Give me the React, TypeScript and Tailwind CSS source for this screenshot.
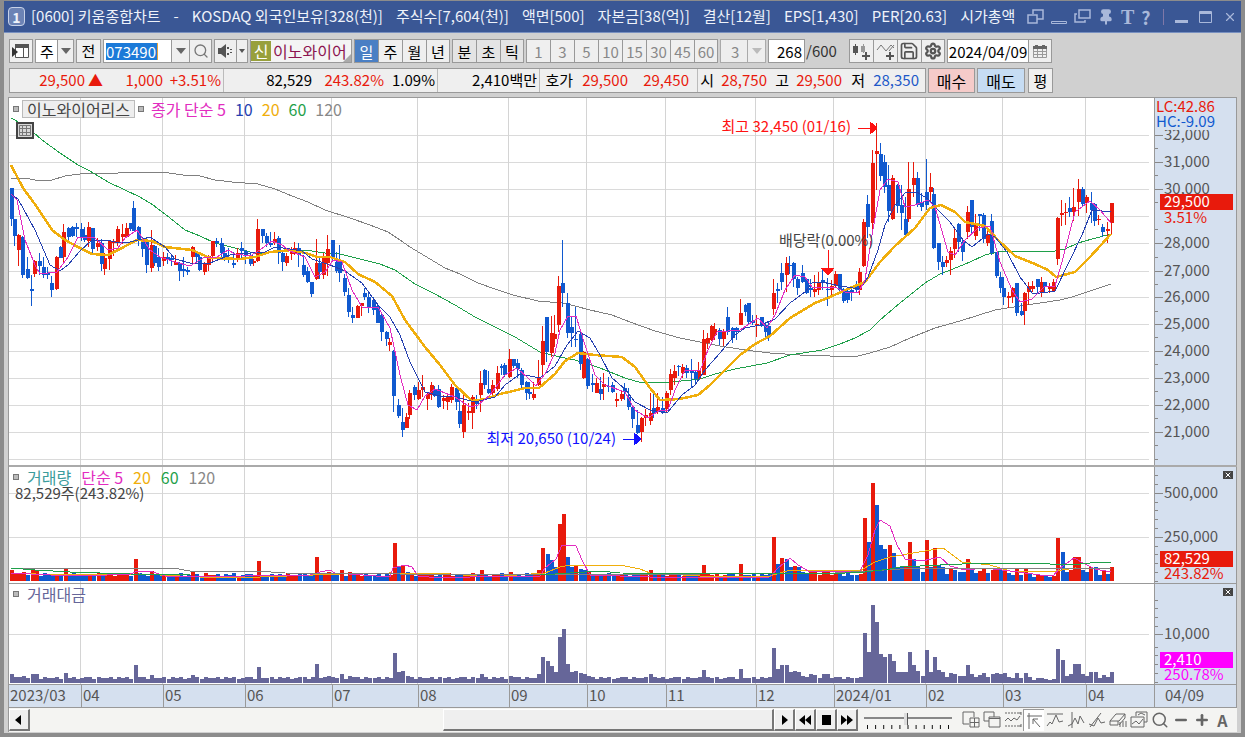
import React from "react";
import {
  Search,
  Save,
  Settings,
  Calendar,
  Pin,
  Volume1,
  Minus,
  Plus,
  X,
} from "lucide-react";

type Candle = [x: number, high: number, top: number, bottom: number, low: number];
type VolumeBar = [x: number, height: number, up: 0 | 1];

const RED = "#e81a0c";
const BLUE = "#1059cf";
const PURPLE = "#666699";
const FIRST_X = 12;
const STEP = 4.12;
const BAR_COUNT = 268;

const upCandles: Candle[] = [
  [19, 234, 235, 250, 266], [35, 260, 261, 274, 277], [57, 256, 257, 289, 290], [64, 224, 232, 257, 263],
  [89, 222, 227, 241, 247], [98, 238, 243, 247, 251], [105, 253, 258, 269, 275], [110, 240, 241, 259, 270],
  [114, 239, 241, 243, 256], [118, 226, 229, 242, 246], [123, 224, 234, 237, 244], [127, 223, 228, 237, 238],
  [152, 230, 245, 268, 272], [164, 252, 257, 261, 266], [176, 255, 262, 265, 265], [193, 246, 247, 257, 264],
  [205, 262, 263, 272, 275], [209, 255, 256, 265, 271], [213, 241, 241, 256, 263], [238, 248, 253, 260, 262],
  [254, 259, 261, 263, 266], [258, 219, 229, 261, 262], [275, 232, 239, 243, 245], [287, 253, 256, 263, 266],
  [292, 247, 251, 254, 260], [295, 242, 248, 253, 255], [317, 239, 263, 279, 280], [324, 253, 257, 275, 279],
  [328, 235, 249, 263, 276], [358, 305, 306, 318, 318], [362, 303, 303, 306, 316], [390, 338, 342, 345, 351],
  [407, 413, 417, 428, 428], [410, 390, 393, 415, 419], [419, 382, 390, 399, 400], [423, 375, 387, 390, 397],
  [428, 392, 394, 399, 410], [432, 382, 385, 395, 400], [444, 395, 398, 401, 409], [448, 395, 397, 402, 410],
  [452, 384, 387, 400, 403], [464, 392, 405, 432, 438], [469, 403, 411, 413, 420], [473, 395, 397, 413, 429],
  [481, 371, 383, 395, 412], [493, 380, 385, 393, 395], [498, 366, 373, 389, 391], [510, 349, 359, 377, 378],
  [534, 382, 394, 398, 400], [539, 360, 377, 385, 386], [543, 326, 341, 365, 375], [552, 316, 333, 353, 357],
  [555, 315, 334, 339, 347], [559, 276, 286, 325, 332], [584, 351, 352, 378, 379], [597, 378, 383, 393, 393],
  [604, 373, 384, 387, 400], [617, 393, 399, 401, 407], [622, 390, 394, 399, 401], [642, 417, 418, 432, 442],
  [646, 409, 415, 418, 426], [651, 393, 413, 421, 425], [658, 393, 407, 412, 414], [667, 391, 393, 409, 412],
  [671, 369, 374, 390, 395], [675, 365, 371, 378, 385], [683, 364, 367, 373, 378], [699, 362, 371, 379, 380],
  [704, 330, 339, 375, 375], [708, 333, 338, 343, 349], [712, 325, 326, 340, 341], [715, 323, 329, 335, 340],
  [724, 329, 331, 339, 346], [741, 299, 313, 325, 325], [757, 315, 324, 326, 337], [774, 279, 293, 309, 315],
  [787, 257, 263, 275, 292], [815, 275, 289, 292, 297], [819, 272, 283, 290, 295], [832, 280, 286, 290, 297],
  [836, 271, 274, 286, 287], [860, 268, 272, 290, 295], [864, 219, 222, 266, 267], [873, 150, 163, 223, 230],
  [877, 123, 151, 154, 190], [893, 175, 178, 219, 220], [909, 162, 189, 219, 222], [914, 162, 178, 185, 197],
  [931, 173, 187, 192, 202], [947, 256, 260, 263, 267], [951, 247, 251, 260, 275], [955, 229, 238, 249, 258],
  [968, 206, 212, 232, 239], [976, 214, 223, 236, 240], [988, 228, 234, 243, 246], [1009, 292, 296, 298, 308],
  [1013, 287, 288, 297, 303], [1025, 292, 293, 311, 325], [1029, 282, 286, 292, 305], [1033, 281, 286, 289, 292],
  [1042, 277, 282, 292, 297], [1050, 283, 287, 289, 293], [1054, 279, 282, 291, 292], [1058, 217, 218, 259, 265],
  [1062, 200, 213, 215, 226], [1066, 203, 212, 213, 225], [1074, 188, 207, 212, 221], [1079, 179, 189, 202, 216],
  [1087, 195, 197, 203, 213], [1099, 215, 219, 220, 225], [1108, 222, 229, 231, 243], [1112, 203, 203, 223, 235],
];

const downCandles: Candle[] = [
  [12, 188, 188, 219, 226], [15, 219, 219, 236, 246], [23, 236, 237, 275, 278], [28, 257, 269, 278, 279],
  [32, 275, 289, 291, 306], [40, 253, 261, 266, 275], [44, 257, 267, 275, 278], [48, 267, 273, 275, 279],
  [52, 276, 283, 290, 297], [61, 246, 247, 258, 258], [69, 227, 228, 237, 243], [73, 226, 227, 236, 237],
  [77, 223, 227, 229, 237], [82, 223, 229, 237, 241], [85, 227, 235, 240, 242], [93, 228, 228, 249, 253],
  [102, 239, 243, 264, 271], [131, 223, 223, 229, 231], [134, 201, 208, 231, 231], [139, 226, 227, 241, 246],
  [143, 237, 239, 249, 257], [147, 237, 240, 265, 273], [155, 245, 246, 263, 266], [159, 248, 257, 267, 271],
  [168, 253, 257, 260, 264], [172, 256, 258, 260, 266], [180, 262, 263, 271, 281], [184, 257, 269, 271, 277],
  [188, 267, 270, 272, 275], [197, 252, 253, 257, 264], [200, 255, 257, 270, 271], [217, 238, 241, 243, 247],
  [222, 238, 243, 253, 257], [225, 247, 253, 257, 261], [229, 248, 257, 258, 263], [234, 252, 263, 265, 268],
  [242, 242, 248, 251, 260], [246, 250, 251, 256, 264], [251, 252, 255, 264, 266], [263, 229, 229, 236, 243],
  [267, 233, 236, 243, 247], [271, 232, 243, 245, 247], [279, 236, 238, 253, 264], [283, 250, 253, 262, 271],
  [299, 243, 248, 255, 267], [304, 255, 265, 275, 277], [308, 267, 271, 282, 283], [312, 282, 282, 294, 297],
  [320, 257, 263, 272, 279], [333, 240, 240, 257, 260], [337, 252, 262, 271, 273], [340, 245, 262, 273, 282],
  [345, 274, 278, 292, 296], [349, 288, 295, 312, 317], [353, 307, 315, 318, 323], [365, 288, 293, 297, 300],
  [369, 293, 297, 308, 313], [374, 297, 300, 310, 315], [378, 303, 306, 323, 323], [382, 313, 315, 332, 341],
  [387, 331, 332, 339, 346], [394, 350, 351, 396, 412], [399, 399, 405, 416, 418], [403, 408, 422, 430, 437],
  [415, 385, 387, 395, 400], [435, 386, 390, 396, 397], [439, 385, 389, 407, 408], [457, 385, 388, 402, 410],
  [460, 393, 411, 424, 428], [477, 395, 401, 404, 409], [485, 369, 370, 385, 389], [489, 371, 389, 393, 394],
  [502, 364, 366, 368, 375], [505, 363, 365, 375, 377], [514, 359, 359, 366, 368], [518, 359, 363, 369, 378],
  [522, 368, 370, 385, 390], [527, 381, 382, 393, 400], [530, 382, 392, 394, 399], [547, 317, 317, 352, 362],
  [563, 240, 283, 293, 307], [568, 293, 303, 333, 338], [572, 317, 327, 333, 347], [576, 307, 339, 340, 347],
  [581, 330, 334, 364, 370], [588, 358, 359, 386, 389], [593, 374, 383, 385, 392], [601, 377, 389, 394, 400],
  [609, 377, 386, 387, 392], [613, 382, 385, 392, 393], [625, 383, 388, 392, 400], [629, 388, 397, 407, 410],
  [633, 405, 407, 419, 428], [638, 410, 425, 433, 434], [654, 393, 408, 413, 418], [663, 397, 408, 413, 414],
  [679, 365, 366, 367, 376], [687, 365, 368, 373, 378], [692, 359, 371, 373, 387], [696, 370, 372, 379, 383],
  [720, 328, 330, 339, 345], [728, 307, 317, 332, 335], [733, 327, 328, 338, 343], [737, 327, 328, 332, 340],
  [746, 304, 305, 312, 316], [749, 303, 303, 322, 325], [753, 315, 321, 323, 325], [762, 317, 317, 326, 327],
  [766, 322, 325, 332, 338], [769, 322, 326, 337, 341], [778, 283, 289, 291, 303], [782, 263, 273, 282, 290],
  [790, 256, 265, 266, 274], [794, 262, 263, 279, 287], [798, 277, 279, 288, 295], [803, 265, 273, 282, 283],
  [807, 278, 279, 293, 294], [811, 279, 288, 290, 297], [823, 268, 280, 283, 290], [828, 278, 289, 290, 306],
  [840, 274, 274, 290, 292], [844, 288, 289, 301, 303], [848, 290, 291, 300, 303], [852, 289, 290, 292, 301],
  [857, 281, 285, 290, 292], [868, 195, 204, 227, 238], [881, 143, 154, 176, 181], [885, 155, 162, 187, 193],
  [889, 165, 185, 211, 222], [898, 184, 185, 206, 213], [902, 185, 205, 213, 230], [906, 197, 219, 235, 236],
  [918, 172, 178, 205, 207], [922, 193, 202, 207, 211], [927, 159, 192, 205, 210], [934, 188, 194, 248, 249],
  [939, 243, 243, 262, 270], [943, 256, 262, 267, 275], [959, 223, 224, 242, 252], [963, 238, 242, 252, 261],
  [972, 200, 200, 227, 233], [980, 214, 214, 216, 231], [984, 213, 215, 239, 243], [992, 214, 221, 253, 255],
  [997, 252, 252, 276, 278], [1001, 272, 277, 288, 293], [1004, 277, 288, 297, 305], [1017, 283, 283, 313, 316],
  [1022, 303, 311, 315, 316], [1038, 279, 279, 287, 293], [1045, 282, 282, 287, 293], [1070, 197, 208, 212, 217],
  [1083, 187, 189, 204, 206], [1092, 192, 203, 210, 223], [1095, 203, 204, 221, 226], [1103, 224, 227, 232, 237],
];

const priceAverages = [
  { color: "#808080", width: 1, points: "11,178 25,178 35,180 52,180 65,176 80,174 90,173 118,173 130,172 162,172 183,175 200,176 215,180 232,182 258,184 275,189 292,196 308,202 325,210 350,218 370,225 388,232 400,240 410,247 430,259 445,268 460,274 478,283 495,289 513,295 538,301 562,303 575,306 590,310 612,315 630,322 655,331 680,338 705,343 720,346 745,350 770,353 800,355 830,356 858,356 870,353 890,347 910,338 935,328 960,321 995,310 1020,306 1060,300 1072,297 1090,291 1111,284" },
  { color: "#1fa04a", width: 1, points: "11,118 22,124 33,132 42,140 60,153 78,165 90,171 108,182 125,190 140,197 153,205 165,214 175,222 185,230 200,236 215,243 235,248 258,254 280,251 305,250 325,253 340,254 360,259 380,264 395,270 415,284 435,294 455,305 475,317 495,327 515,337 540,352 560,357 575,360 600,368 625,378 642,383 672,382 700,379 715,374 735,369 767,363 790,355 822,350 840,344 855,338 870,330 880,320 900,303 925,283 940,274 958,267 970,262 985,255 998,252 1015,251 1050,252 1065,249 1078,243 1092,239 1111,234" },
  { color: "#f0ae0c", width: 2.5, points: "11,165 23,188 37,207 52,230 65,240 78,247 92,254 108,255 120,249 137,240 152,241 165,247 192,250 210,258 240,259 255,257 270,252 292,250 305,253 318,257 330,257 345,262 358,274 375,282 392,296 405,320 425,347 440,365 455,385 472,401 485,399 500,394 513,391 525,388 539,388 555,374 565,361 578,353 595,355 622,357 635,367 650,388 660,400 680,399 698,395 710,385 725,370 740,355 755,344 770,336 790,318 815,303 830,297 850,288 865,282 880,262 895,246 915,228 930,208 941,205 955,212 965,222 985,226 998,240 1015,256 1035,264 1048,270 1056,277 1075,272 1090,257 1111,234" },
  { color: "#2540b0", width: 1, points: "11,194 18,199 35,230 50,265 60,271 68,265 80,251 92,240 108,240 118,243 130,242 150,237 165,247 175,259 190,263 210,263 230,255 250,253 265,252 275,247 290,249 302,251 312,259 330,265 345,271 362,283 378,305 390,317 400,335 410,362 425,392 440,396 455,397 475,402 495,397 505,385 520,374 540,378 555,366 567,345 578,331 590,338 600,355 612,378 625,389 635,402 650,410 667,413 682,395 695,385 705,370 720,353 735,335 745,328 760,325 775,319 790,303 805,292 812,283 822,282 840,286 860,289 868,277 878,250 885,225 895,205 905,193 917,192 928,199 935,207 950,222 963,240 972,247 988,234 995,237 1007,252 1020,277 1033,294 1055,291 1070,260 1082,235 1092,210 1111,212" },
  { color: "#e22cc0", width: 1, points: "11,194 17,200 25,240 35,265 40,274 57,272 68,257 78,237 95,238 108,250 118,248 125,238 137,230 150,250 160,257 175,262 190,266 205,257 217,257 228,250 235,254 250,256 260,250 272,241 282,245 290,251 305,257 315,277 325,272 333,260 342,262 352,290 362,307 378,307 390,328 400,375 408,405 417,410 425,396 435,389 455,397 470,407 478,405 490,395 505,375 517,368 528,378 536,386 545,374 555,353 560,330 568,316 576,316 585,345 595,375 605,385 625,392 635,410 648,418 660,410 668,410 675,390 685,370 700,371 708,350 717,332 740,330 758,318 767,328 775,315 785,290 795,275 805,277 812,287 825,287 835,287 845,292 858,293 865,280 872,235 880,190 888,179 898,182 905,207 915,205 928,200 935,207 948,252 955,255 965,240 978,228 990,226 1000,262 1012,290 1020,302 1032,299 1045,286 1055,286 1062,262 1075,212 1090,201 1100,210 1111,223" },
];

const volumeAverages = [
  { color: "#f0ae0c", points: "11,573 60,575 140,574 200,577 260,577 340,574 390,573 450,574 490,577 545,573 560,567 570,565 620,565 640,569 650,573 700,576 770,576 790,570 830,570 860,571 875,562 890,557 925,551 943,548 962,562 990,565 1010,571 1050,572 1075,568 1111,569" },
  { color: "#e22cc0", points: "11,573 50,575 85,576 130,574 138,571 150,571 165,576 180,577 310,575 320,572 330,570 335,573 390,577 393,568 405,565 412,567 418,576 440,578 500,576 540,576 545,568 556,559 562,545 576,546 582,560 590,575 680,578 770,577 778,568 790,558 798,565 810,572 860,571 868,555 875,530 880,520 890,526 897,545 905,559 922,561 940,557 950,566 965,570 985,568 1010,571 1040,575 1053,576 1060,568 1074,558 1085,564 1095,569 1111,572" },
  { color: "#808080", points: "11,568 94,568 173,568 190,571 256,571 285,573 400,574 480,575 700,574 835,573 900,569 1111,568" },
  { color: "#1fa04a", points: "11,568 35,570 70,572 130,574 190,575 540,575 600,571 620,573 825,574 865,572 890,569 900,567 940,565 985,563 1030,563 1070,565 1090,563 1111,562" },
];

const heavyVolume: VolumeBar[] = [
  [12, 11, 1], [16, 8, 1], [24, 9, 1], [32, 11, 1], [36, 11, 1], [64, 12, 1], [134, 22, 1], [139, 8, 0], [152, 10, 1],
  [193, 10, 1], [258, 20, 1], [317, 24, 1], [328, 9, 1], [340, 11, 1], [349, 9, 1], [394, 38, 1], [399, 14, 0],
  [403, 15, 1], [407, 9, 0], [481, 11, 1], [511, 9, 1], [539, 11, 1], [543, 33, 1], [547, 27, 0], [552, 21, 0],
  [556, 14, 0], [559, 57, 1], [563, 67, 1], [568, 24, 0], [572, 14, 0], [576, 15, 1], [580, 12, 0], [584, 11, 0],
  [588, 9, 1], [651, 11, 1], [704, 16, 1], [741, 17, 1], [774, 44, 1], [778, 17, 0], [782, 23, 1], [787, 22, 0],
  [791, 14, 0], [794, 15, 1], [798, 14, 0], [803, 9, 0], [811, 11, 1], [815, 10, 1], [823, 11, 1], [828, 11, 1],
  [864, 63, 1], [868, 39, 0], [873, 98, 1], [877, 76, 0], [881, 36, 0], [885, 32, 0], [889, 36, 1], [893, 28, 0],
  [898, 14, 0], [902, 14, 0], [906, 14, 1], [910, 39, 1], [914, 22, 0], [918, 15, 0], [922, 9, 0], [926, 41, 1],
  [930, 14, 0], [934, 33, 1], [939, 16, 0], [943, 14, 0], [947, 7, 0], [951, 12, 1], [955, 11, 0], [959, 9, 0],
  [963, 9, 0], [968, 22, 1], [972, 11, 0], [976, 8, 0], [980, 10, 1], [984, 12, 1], [988, 8, 0], [992, 11, 1],
  [997, 13, 1], [1001, 11, 0], [1005, 13, 1], [1009, 8, 0], [1013, 6, 0], [1017, 13, 1], [1021, 6, 0], [1025, 12, 1],
  [1029, 8, 0], [1033, 4, 0], [1038, 6, 1], [1042, 6, 1], [1046, 5, 0], [1050, 4, 0], [1054, 5, 1], [1058, 43, 1],
  [1062, 29, 0], [1066, 9, 0], [1070, 11, 1], [1075, 24, 1], [1079, 24, 1], [1083, 11, 0], [1087, 9, 0],
  [1091, 14, 1], [1095, 14, 0], [1099, 6, 0], [1103, 10, 1], [1108, 7, 0], [1112, 14, 1],
];

const quietHeights = [7, 6, 8, 5, 6, 7, 7, 5, 8, 6, 6, 7, 5];

const slotOf = (x: number) => Math.round((x - FIRST_X) / STEP);

const volumeBars = Array.from({ length: BAR_COUNT }, (_, i) => {
  const heavy = heavyVolume.find((bar) => slotOf(bar[0]) === i);
  return {
    x: Math.round(FIRST_X + i * STEP) - 2,
    height: heavy ? heavy[1] : quietHeights[i % quietHeights.length],
    up: heavy ? heavy[2] === 1 : upCandles.some((candle) => slotOf(candle[0]) === i),
  };
});

const months = [
  { x: 9, label: "2023/03" },
  { x: 81, label: "04" },
  { x: 163, label: "05" },
  { x: 245, label: "06" },
  { x: 332, label: "07" },
  { x: 418, label: "08" },
  { x: 509, label: "09" },
  { x: 587, label: "10" },
  { x: 666, label: "11" },
  { x: 756, label: "12" },
  { x: 834, label: "2024/01" },
  { x: 926, label: "02" },
  { x: 1003, label: "03" },
  { x: 1086, label: "04" },
];

const priceLines = [135, 162, 189, 216, 243, 271, 297, 324, 351, 378, 405, 432, 459];

const priceLabels = [
  { y: 135, text: "32,000" },
  { y: 162, text: "31,000" },
  { y: 189, text: "30,000" },
  { y: 243, text: "28,000" },
  { y: 271, text: "27,000" },
  { y: 297, text: "26,000" },
  { y: 324, text: "25,000" },
  { y: 351, text: "24,000" },
  { y: 378, text: "23,000" },
  { y: 405, text: "22,000" },
  { y: 432, text: "21,000" },
];

interface PlotProps {
  top: number;
  height: number;
  lines: number[];
  children: React.ReactNode;
}

const Plot = ({ top, height, lines, children }: PlotProps) => (
  <svg
    className="block w-full bg-white"
    height={height}
    viewBox={`9 ${top} 1145 ${height}`}
    preserveAspectRatio="none"
    shapeRendering="crispEdges"
  >
    {lines.map((y) => (
      <rect key={y} x={9} y={y} width={1140} height={1} fill="#dadada" />
    ))}
    {months.slice(1).map((month) => (
      <rect key={month.x} x={month.x - 1} y={top} width={1} height={height} fill="#d4d4d4" />
    ))}
    {children}
  </svg>
);

const Candles = ({ data, color }: { data: Candle[]; color: string }) => (
  <g fill={color}>
    {data.map(([x, high, top, bottom, low]) => (
      <g key={x}>
        <rect x={x - 1} y={high} width={1} height={Math.max(low - high, 1)} />
        <rect x={x - 2} y={top} width={4} height={Math.max(bottom - top, 1)} />
      </g>
    ))}
  </g>
);

interface AxisProps {
  top: number;
  height: number;
  labels: { y: number; text: string }[];
  minor: number[];
  children?: React.ReactNode;
}

const Axis = ({ top, height, labels, minor, children }: AxisProps) => (
  <svg
    className="block w-[83px] shrink-0 border-x border-[#999] bg-[#d5e0ef]"
    height={height}
    viewBox={`1155 ${top} 81 ${height}`}
  >
    {minor.map((y) => (
      <rect key={y} x={1155} y={y} width={3} height={1} fill="#888" />
    ))}
    {labels.map((label) => (
      <g key={label.text}>
        <rect x={1155} y={label.y} width={8} height={1} fill="#888" />
        <text x={1164} y={label.y + 5} fill="#555">
          {label.text}
        </text>
      </g>
    ))}
    {children}
  </svg>
);

const Handle = () => <span className="size-1.5 border border-[#777] bg-[#bbb]" />;

const ClosePane = () => (
  <button
    aria-label="닫기"
    className="absolute top-1 right-1 flex h-2 w-2.5 items-center justify-center bg-[#444] text-white"
  >
    <X className="size-2" strokeWidth={3} />
  </button>
);

const ToolButton = ({
  label,
  className = "w-6",
  children,
}: {
  label?: string;
  className?: string;
  children: React.ReactNode;
}) => (
  <button
    aria-label={label}
    className={`flex h-6 shrink-0 items-center justify-center border border-[#999] bg-[#efefef] ${className}`}
  >
    {children}
  </button>
);

const Group = ({ items, className }: { items: string[]; className: string }) => (
  <div className="flex shrink-0 border border-[#999]">
    {items.map((item) => (
      <button
        key={item}
        className={`h-[22px] w-6 border-r border-[#999] leading-none last:w-[22px] last:border-r-0 ${
          item === "일" ? "bg-[#4a7fc4] text-white" : className
        }`}
      >
        {item}
      </button>
    ))}
  </div>
);

const ArrowDown = ({ color = "#666" }: { color?: string }) => (
  <svg width="10" height="6" viewBox="0 0 10 6">
    <path d="M0 0h10L5 6z" fill={color} />
  </svg>
);

const TitleBar = () => (
  <header className="flex h-8 items-center border-b border-[#7890c0] bg-[#3a5795] pr-1 pl-1 text-[#eef2fa]">
    <span className="mr-1.5 flex h-[19px] w-[17px] shrink-0 items-center justify-center rounded-sm border border-[#c8d2e8] bg-[#6c83b5] text-sm font-bold">
      1
    </span>
    <h1 className="flex min-w-0 flex-1 gap-[13px] overflow-hidden whitespace-nowrap">
      <span>[0600] 키움종합차트</span>
      <span>-</span>
      <span>KOSDAQ 외국인보유[328(천)]</span>
      <span>주식수[7,604(천)]</span>
      <span>액면[500]</span>
      <span>자본금[38(억)]</span>
      <span>결산[12월]</span>
      <span>EPS[1,430]</span>
      <span>PER[20.63]</span>
      <span>시가총액</span>
    </h1>
    <div className="ml-1.5 flex shrink-0 items-center gap-[7px] text-[#a9b8da]">
      <button aria-label="창 분리">
        <svg width="17" height="16" viewBox="0 0 17 16" fill="none" stroke="currentColor" strokeWidth="1.5">
          <path d="M6 5V1h10v9h-6M1 6h9v8H1z" />
        </svg>
      </button>
      <button aria-label="내리기">
        <svg width="16" height="16" viewBox="0 0 16 16" fill="none" stroke="currentColor">
          <path d="M.5 12.500h15v2H.5z" />
        </svg>
      </button>
      <button aria-label="복사">
        <svg width="17" height="16" viewBox="0 0 17 16" fill="none" stroke="currentColor" strokeWidth="1.5">
          <path d="M5 1h11v8H5zM3 5H1v8h10v-2" />
        </svg>
      </button>
      <button aria-label="고정">
        <Pin className="size-4" fill="currentColor" strokeWidth={3} />
      </button>
      <button className="w-3 font-['Liberation_Serif',serif] text-xl leading-none font-bold">T</button>
      <button className="w-3 text-lg leading-none font-bold">?</button>
      <span className="mx-1 h-4 w-px bg-[#7f78a8]" />
      <button aria-label="최소화">
        <svg width="13" height="16" viewBox="0 0 13 16">
          <path d="M0 11h13v3H0z" fill="currentColor" />
        </svg>
      </button>
      <button aria-label="최대화" className="ml-1">
        <svg width="13" height="14" viewBox="0 0 13 14" fill="none" stroke="currentColor">
          <path d="M.5 1.500h12v11H.5zM0 2.500h13M0 3.500h13" />
        </svg>
      </button>
      <button aria-label="닫기" className="ml-1">
        <X className="size-3.5" strokeWidth={2} />
      </button>
    </div>
  </header>
);

const Toolbar = () => (
  <div className="flex items-center gap-0.5">
    <ToolButton label="메뉴">
      <svg width="18" height="16" viewBox="0 0 18 16">
        <path d="M3.500 1.500h13v13h-13z" fill="#fff" stroke="#555" />
        <path d="M3 1h14v4H3z" fill="#555" />
        <path d="M11.500 5v9" stroke="#555" />
        <path d="M0 4l6 5-6 5z" fill="#333" />
      </svg>
    </ToolButton>
    <div className="relative flex h-6 w-[39px] shrink-0 items-center border border-[#999] bg-white">
      <select aria-label="구분" defaultValue="주" className="h-full w-full appearance-none pl-1 leading-none">
        <option>주</option>
      </select>
      <span className="pointer-events-none absolute inset-y-0 right-0 flex w-4 items-center justify-center border-l border-[#999] bg-[#efefef]">
        <ArrowDown />
      </span>
    </div>
    <ToolButton className="w-[25px]">전</ToolButton>
    <div className="flex h-6 w-[109px] shrink-0 border border-[#999] bg-white">
      <label className="flex w-[67px] items-center pl-0.5">
        <span className="sr-only">종목코드</span>
        <input
          defaultValue="073490"
          className="h-[17px] w-[52px] border-r border-[#e8a33a] bg-[#1c7ad8] leading-none text-white"
        />
      </label>
      <button aria-label="종목 목록" className="flex w-[18px] items-center justify-center border-l border-[#999] bg-[#efefef]">
        <ArrowDown />
      </button>
      <button aria-label="검색" className="flex flex-1 items-center justify-center border-l border-[#999] bg-[#efefef]">
        <Search className="size-4 text-[#777]" />
      </button>
    </div>
    <div className="flex h-6 w-[34px] shrink-0 border border-[#999] bg-[#efefef]">
      <button aria-label="소리" className="flex w-[22px] items-center justify-center border-r border-[#999]">
        <svg width="17" height="14" viewBox="0 0 17 14" fill="#555">
          <path d="M1 4h3l5-4v14l-5-4H1zM10 3h2v2h-2zM10 9h2v2h-2zM13 5h2v1h-2zM13 8h2v1h-2z" />
        </svg>
      </button>
      <button aria-label="소리 설정" className="flex flex-1 items-center justify-center">
        <svg width="6" height="4" viewBox="0 0 6 4">
          <path d="M0 0h6L3 4z" fill="#555" />
        </svg>
      </button>
    </div>
    <div className="relative flex h-6 w-[102px] shrink-0 items-center overflow-hidden border border-[#999] bg-[#f4f4f4] text-base whitespace-nowrap">
      <span className="mr-0.5 flex h-5 w-5 shrink-0 items-center justify-center bg-[#98a03c] text-white">신</span>
      <span className="text-[#8c1450]">이노와이어</span>
      <svg className="absolute right-0 bottom-0" width="8" height="8" viewBox="0 0 8 8">
        <path d="M8 0v8H0z" fill="#aaa" />
      </svg>
    </div>
    <Group items={["일", "주", "월", "년"]} className="bg-[#efefef] text-black" />
    <Group items={["분", "초", "틱"]} className="bg-[#e4e4e4] text-black" />
    <Group items={["1", "3", "5", "10", "15", "30", "45", "60"]} className="bg-[#efefef] text-[#888]" />
    <div className="relative flex h-6 w-[46px] shrink-0 border border-[#aaa] bg-[#eee]">
      <select aria-label="분 선택" defaultValue="3" className="w-full appearance-none pl-2.5 leading-none text-[#888]">
        <option>3</option>
      </select>
      <span className="pointer-events-none absolute inset-y-0 right-0 flex w-[18px] items-center justify-center border-l border-[#aaa]">
        <ArrowDown color="#bbb" />
      </span>
    </div>
    <label className="flex shrink-0 items-center text-[#333]">
      <input
        aria-label="표시 개수"
        defaultValue="268"
        className="mr-px h-6 w-[37px] border border-[#999] bg-white pr-0.5 text-right leading-none text-black"
      />
      /600
    </label>
    <div className="ml-2.5 flex shrink-0 border border-[#999] bg-[#efefef] text-[#555]">
      <button aria-label="봉 추가" className="flex h-[22px] w-6 items-center justify-center border-r border-[#999]">
        <svg width="18" height="17" viewBox="0 0 18 17" fill="currentColor">
          <path d="M1 3h5v7H1zM3 1h1v11H3z" />
          <path d="M9 3h4v6H9zM11 1h1v9h-1z" fill="#999" />
          <path d="M13 9h2v3h3v2h-3v3h-2v-3h-3v-2h3z" />
        </svg>
      </button>
      <button aria-label="지표 추가" className="flex h-[22px] w-6 items-center justify-center border-r border-[#999]">
        <svg width="19" height="17" viewBox="0 0 19 17">
          <path d="M1 7l4-5 5 6 5-6 3 3M13 8l5-6" fill="none" stroke="#777" />
          <path d="M13 9h2v3h3v2h-3v3h-2v-3h-3v-2h3z" fill="currentColor" />
        </svg>
      </button>
      <button aria-label="저장" className="flex h-[22px] w-6 items-center justify-center border-r border-[#999]">
        <Save className="size-5" strokeWidth={2} />
      </button>
      <button aria-label="설정" className="flex h-[22px] w-[22px] items-center justify-center">
        <Settings className="size-[18px]" strokeWidth={3} />
      </button>
    </div>
    <div className="flex h-6 shrink-0 border border-[#999] bg-white">
      <input aria-label="기준일" defaultValue="2024/04/09" className="w-20 pl-px leading-none" />
      <button aria-label="달력" className="flex w-[23px] items-center justify-center border-l border-[#999] bg-[#efefef]">
        <svg width="14" height="13" viewBox="0 0 14 13" fill="none" stroke="#666">
          <path d="M.5 1.500h13v11H.5zM.5 6.500h13M.5 9.500h13M4.500 4v8M9.500 4v8" stroke="#999" />
          <path d="M0 2.500h14M3.500 0v2M10.500 0v2" strokeWidth="3" />
        </svg>
      </button>
    </div>
  </div>
);

const quoteCells = [
  { text: "29,500", className: "w-[75px] text-[#e81a0c]" },
  { text: "▲", className: "w-[18px] text-[#e81a0c]" },
  { text: "1,000", className: "w-[60px] text-[#e81a0c]" },
  { text: "+3.51%", className: "w-[61px] border-r border-[#bbb] pr-0.5 text-[#e81a0c]" },
  { text: "82,529", className: "w-[88px]" },
  { text: "243.82%", className: "w-[72px] text-[#e81a0c]" },
  { text: "1.09%", className: "w-[54px] border-r border-[#bbb] pr-0.5" },
  { text: "2,410백만", className: "w-[102px] border-r border-[#bbb] pr-0.5" },
  { text: "호가", className: "w-[33px]" },
  { text: "29,500", className: "w-[55px] text-[#e81a0c]" },
  { text: "29,450", className: "w-[70px] border-r border-[#bbb] pr-2 text-[#e81a0c]" },
  { text: "시", className: "w-4" },
  { text: "28,750", className: "w-[53px] text-[#e81a0c]" },
  { text: "고", className: "w-[22px]" },
  { text: "29,500", className: "w-[53px] text-[#e81a0c]" },
  { text: "저", className: "w-[23px]" },
  { text: "28,350", className: "w-[60px] pr-1.5 text-[#2058c8]" },
];

const QuoteBar = () => (
  <div className="flex items-center gap-0.5">
    <div className="flex h-[25px] shrink-0 items-center border border-[#999] bg-[#efefef]">
      {quoteCells.map((cell, index) => (
        <span
          key={index}
          className={`flex h-full shrink-0 items-center justify-end whitespace-nowrap ${cell.className}`}
        >
          {cell.text}
        </span>
      ))}
    </div>
    <button className="h-[25px] w-[47px] border border-[#999] bg-[#f5cbc9] text-base leading-none">매수</button>
    <button className="mr-px h-[25px] w-12 border border-[#999] bg-[#c6dcf3] text-base leading-none">매도</button>
    <button className="h-[25px] w-[25px] border border-[#999] bg-[#efefef] leading-none">평</button>
  </div>
);

const PricePane = () => (
  <section className="relative flex border-b-2 border-[#aaa]">
    <div className="relative min-w-0 flex-1">
      <Plot top={98} height={367} lines={priceLines}>
        {priceAverages.slice(0, 2).map((line) => (
          <polyline key={line.color} points={line.points} fill="none" stroke={line.color} strokeWidth={line.width} />
        ))}
        <Candles data={upCandles} color={RED} />
        <Candles data={downCandles} color={BLUE} />
        {priceAverages.slice(2).map((line) => (
          <polyline key={line.color} points={line.points} fill="none" stroke={line.color} strokeWidth={line.width} />
        ))}
        <path d="M858 128h12M870 122l7 6-7 6z" stroke="#f11" fill="#f11" />
        <path d="M828 250v18M821 268h13l-6 7z" stroke="#f11" fill="#f11" />
        <path d="M623 439h11M634 433l7 6-7 6z" stroke="#11f" fill="#11f" />
        <text x={851} y={132} textAnchor="end" fill="#f11">
          최고 32,450 (01/16)
        </text>
        <text x={779} y={246} fill="#444">
          배당락(0.00%)
        </text>
        <text x={616} y={444} textAnchor="end" fill="#11f">
          최저 20,650 (10/24)
        </text>
      </Plot>
      <div className="absolute top-0.5 left-1 flex items-center gap-[3px] text-base leading-none">
        <Handle />
        <span className="border border-[#bbb] bg-[#eee] px-1 leading-4 text-[#444]">이노와이어리스</span>
        <Handle />
        <span className="ml-1 text-[#e22cc0]">종가 단순 5</span>
        <span className="ml-1.5 text-[#2540b0]">10</span>
        <span className="ml-1.5 text-[#f0ae0c]">20</span>
        <span className="ml-1.5 text-[#1fa04a]">60</span>
        <span className="ml-1.5 text-[#888]">120</span>
      </div>
      <button aria-label="표 보기" className="absolute top-6 left-[7px]">
        <svg width="18" height="17" viewBox="0 0 18 17" fill="none" stroke="#444">
          <path d="M1 1h16v15H1z" fill="#d8d8d8" strokeWidth="2" />
          <path d="M3.500 3.500h11v10h-11zM6.500 3v11M10.500 3v11M3 6.500h12M3 10.500h12" stroke="#777" />
        </svg>
      </button>
    </div>
    <Axis
      top={98}
      height={367}
      labels={priceLabels}
      minor={[148, 175, 202, 229, 257, 284, 311, 337, 364, 391, 418, 445, 459]}
    >
      <rect x={1155} y={98} width={81} height={32} fill="#d5e0ef" />
      <text x={1156} y={112} fill={RED}>
        LC:42.86
      </text>
      <text x={1156} y={127} fill={BLUE}>
        HC:-9.09
      </text>
      <rect x={1160} y={194} width={73} height={16} fill={RED} />
      <text x={1164} y={207} fill="#fff">
        29,500
      </text>
      <text x={1164} y={223} fill={RED}>
        3.51%
      </text>
    </Axis>
  </section>
);

const VolumePane = () => (
  <section className="relative flex border-b border-[#999]">
    <div className="relative min-w-0 flex-1">
      <Plot top={467} height={116} lines={[493, 537]}>
        {volumeBars.map((bar) => (
          <rect key={bar.x} x={bar.x} y={581 - bar.height} width={4} height={bar.height} fill={bar.up ? RED : BLUE} />
        ))}
        {volumeAverages.map((line) => (
          <polyline key={line.color} points={line.points} fill="none" stroke={line.color} />
        ))}
      </Plot>
      <div className="absolute top-0.5 left-1 flex items-center gap-2.5 text-base leading-4">
        <Handle />
        <span className="-ml-0.5 text-[#3c9c9c]">거래량</span>
        <span className="text-[#e22cc0]">단순 5</span>
        <span className="text-[#f0ae0c]">20</span>
        <span className="text-[#1fa04a]">60</span>
        <span className="text-[#888]">120</span>
      </div>
      <p className="absolute top-[18px] left-1.5 leading-4 text-[#444]">82,529주(243.82%)</p>
    </div>
    <Axis
      top={467}
      height={116}
      labels={[
        { y: 493, text: "500,000" },
        { y: 537, text: "250,000" },
      ]}
      minor={[475, 484, 502, 510, 519, 528, 546, 554, 563, 572, 581]}
    >
      <rect x={1160} y={551} width={73} height={16} fill={RED} />
      <text x={1164} y={564} fill="#fff">
        82,529
      </text>
      <text x={1164} y={579} fill={RED}>
        243.82%
      </text>
    </Axis>
    <ClosePane />
  </section>
);

const AmountPane = () => (
  <section className="relative flex border-b border-[#999]">
    <div className="relative min-w-0 flex-1">
      <Plot top={584} height={100} lines={[634]}>
        {volumeBars.map((bar) => {
          const height = Math.max(Math.round(bar.height * 0.8), 3);
          return <rect key={bar.x} x={bar.x} y={683 - height} width={4} height={height} fill={PURPLE} />;
        })}
      </Plot>
      <div className="absolute top-0.5 left-1 flex items-center gap-2 text-base leading-4">
        <Handle />
        <span className="text-[#666699]">거래대금</span>
      </div>
    </div>
    <Axis
      top={584}
      height={100}
      labels={[{ y: 634, text: "10,000" }]}
      minor={[600, 608, 617, 626, 647, 655, 664, 673, 682]}
    >
      <rect x={1160} y={652} width={73} height={16} fill="#ff00ff" />
      <text x={1164} y={665} fill="#fff">
        2,410
      </text>
      <text x={1164} y={680} fill="#ff00ff">
        250.78%
      </text>
    </Axis>
    <ClosePane />
  </section>
);

const DateAxis = () => (
  <div className="flex h-[23px] items-center border-b border-[#999] bg-[#d5e0ef] leading-5 text-[#555]">
    <div className="flex h-full min-w-0 flex-1">
      {months.map((month, index) => {
        const end = index + 1 < months.length ? months[index + 1].x : 1154;
        return (
          <span
            key={month.x}
            className="border-l border-[#999] pl-px first:border-l-0"
            style={{ width: `${((end - month.x) / 1145) * 100}%` }}
          >
            {month.label}
          </span>
        );
      })}
    </div>
    <span className="h-full w-[83px] shrink-0 border-x border-[#999] pl-2.5">04/09</span>
  </div>
);

const ScrollButton = ({ label, path }: { label: string; path: string }) => (
  <button
    aria-label={label}
    className="flex h-[22px] w-[21px] shrink-0 items-center justify-center border-t border-r-2 border-b-2 border-l border-t-white border-r-[#777] border-b-[#777] border-l-white bg-[#efefef]"
  >
    <svg width="14" height="12" viewBox="0 0 14 12">
      <path d={path} fill="#000" />
    </svg>
  </button>
);

const chartTools = [
  { label: "창 추가", path: "M12 6V1H1v12h6M8 7h9v9H8zM12.500 7v9M8 11.500h9" },
  { label: "창 겹치기", path: "M6 10H1V1h10v5M6 6h11v10H6zM6 7.500h11" },
  { label: "구간 지표", path: "M1 2h2m1 0h2m1 0h2m1 0h2m1 0h4M1 15h2m1 0h2m1 0h2m1 0h2m1 0h4M1 10l3-3 3 3 3-3 3 2 3-4M17 1v3M17 13v3" },
  { label: "십자선", path: "M4 1v16M2 4h15M8 7l7 8M8 7v5M8 7h5" },
  { label: "수평선", path: "M1 3h16M1 15l3-4 2 2 4-9 3 7 4-1" },
  { label: "수직선", path: "M5 1v16M1 15l4-2 3-6 3 6 2-8 4 7" },
  { label: "추세선", path: "M2 16L13 2M1 13l5 2 4-8 3 5 4-1" },
  { label: "지우개", path: "M1 10l6-7h9l-6 7zM1 10v4h8v-4M10 14l6-7V3M11 11v5M14 10v6M17 10v6" },
  { label: "차트 복사", path: "M6 5V1h11v10h-3M1 6h13v10H1zM2 13l4-3 3 3 4-5M8 4l3-2 4 2" },
];

const BottomBar = () => (
  <footer className="flex h-6 items-center bg-[#f4f4f2] pr-1">
    <ScrollButton label="이전" path="M9 1v10L3 6z" />
    <div className="flex min-w-0 flex-1 justify-end">
      <div className="h-[22px] w-[44.5%] border-t border-r-2 border-b-2 border-l border-t-white border-r-[#777] border-b-[#777] border-l-white bg-[#efefef]" />
    </div>
    <ScrollButton label="다음" path="M5 1v10l6-5z" />
    <ScrollButton label="뒤로 감기" path="M7 1v10L1 6zM13 1v10L7 6z" />
    <ScrollButton label="정지" path="M3 1h9v10H3z" />
    <ScrollButton label="앞으로 감기" path="M1 1v10l6-5zM7 1v10l6-5z" />
    <div className="ml-1.5 flex w-[88px] shrink-0 flex-col">
      <input
        type="range"
        aria-label="확대 비율"
        defaultValue={48}
        className="h-3.5 w-full appearance-none bg-transparent [&::-webkit-slider-runnable-track]:h-0.5 [&::-webkit-slider-runnable-track]:bg-[#888] [&::-webkit-slider-thumb]:-mt-1 [&::-webkit-slider-thumb]:h-3 [&::-webkit-slider-thumb]:w-1 [&::-webkit-slider-thumb]:appearance-none [&::-webkit-slider-thumb]:border-r [&::-webkit-slider-thumb]:border-[#555] [&::-webkit-slider-thumb]:bg-[#ddd]"
      />
      <svg width="88" height="4" viewBox="0 0 88 4">
        <path d="M3 2h85" stroke="#111" strokeWidth="4" strokeDasharray="1 7.100" />
      </svg>
    </div>
    <div className="ml-2 flex shrink-0 items-center text-[#666]">
      {chartTools.map((tool, index) => (
        <button
          key={tool.label}
          aria-label={tool.label}
          className={`flex h-[22px] w-[21px] items-center justify-center ${
            index === 3 ? "border-t border-l border-[#999] bg-white" : ""
          }`}
        >
          <svg width="18" height="18" viewBox="0 0 18 18" fill="none" stroke="currentColor">
            <path d={tool.path} />
          </svg>
        </button>
      ))}
      <button aria-label="돋보기" className="flex h-[22px] w-[21px] items-center justify-center">
        <Search className="size-[18px]" />
      </button>
      <button aria-label="축소" className="flex h-[22px] w-[21px] items-center justify-center">
        <Minus className="size-4" strokeWidth={4} />
      </button>
      <button aria-label="확대" className="flex h-[22px] w-[21px] items-center justify-center">
        <Plus className="size-4" strokeWidth={4} />
      </button>
      <button className="h-[22px] w-[21px] text-base leading-none font-bold">A</button>
    </div>
  </footer>
);

export default function App() {
  return (
    <div className="min-h-screen border-x-4 border-t border-b-4 border-[#8c8c8c] bg-[#d0d0d0] font-['Noto_Sans_CJK_KR',sans-serif] text-[15px] text-black">
      <TitleBar />
      <div className="flex flex-col gap-[5px] overflow-hidden px-[5px] pt-1.5 pb-1">
        <Toolbar />
        <QuoteBar />
      </div>
      <main className="mx-1 border-t border-l border-[#999]">
        <PricePane />
        <VolumePane />
        <AmountPane />
        <DateAxis />
        <BottomBar />
      </main>
    </div>
  );
}
